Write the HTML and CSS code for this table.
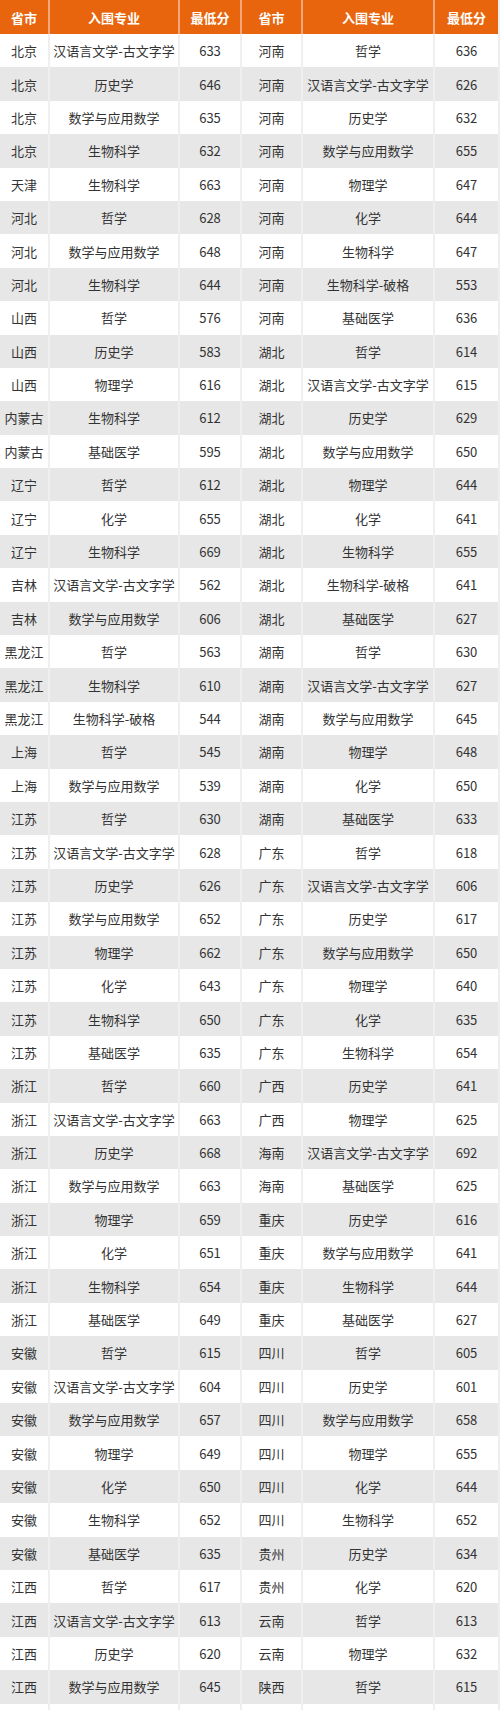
FILE: index.html
```html
<!DOCTYPE html>
<html lang="zh">
<head>
<meta charset="utf-8">
<title>入围专业最低分</title>
<link rel="stylesheet" href="styles.css">
</head>
<body>
<div class="table">
  <div class="row head"><div class="c">省市</div><div class="c">入围专业</div><div class="c">最低分</div><div class="c">省市</div><div class="c">入围专业</div><div class="c">最低分</div></div>
  <div class="row"><div class="c">北京</div><div class="c">汉语言文学-古文字学</div><div class="c">633</div><div class="c">河南</div><div class="c">哲学</div><div class="c">636</div></div>
  <div class="row"><div class="c">北京</div><div class="c">历史学</div><div class="c">646</div><div class="c">河南</div><div class="c">汉语言文学-古文字学</div><div class="c">626</div></div>
  <div class="row"><div class="c">北京</div><div class="c">数学与应用数学</div><div class="c">635</div><div class="c">河南</div><div class="c">历史学</div><div class="c">632</div></div>
  <div class="row"><div class="c">北京</div><div class="c">生物科学</div><div class="c">632</div><div class="c">河南</div><div class="c">数学与应用数学</div><div class="c">655</div></div>
  <div class="row"><div class="c">天津</div><div class="c">生物科学</div><div class="c">663</div><div class="c">河南</div><div class="c">物理学</div><div class="c">647</div></div>
  <div class="row"><div class="c">河北</div><div class="c">哲学</div><div class="c">628</div><div class="c">河南</div><div class="c">化学</div><div class="c">644</div></div>
  <div class="row"><div class="c">河北</div><div class="c">数学与应用数学</div><div class="c">648</div><div class="c">河南</div><div class="c">生物科学</div><div class="c">647</div></div>
  <div class="row"><div class="c">河北</div><div class="c">生物科学</div><div class="c">644</div><div class="c">河南</div><div class="c">生物科学-破格</div><div class="c">553</div></div>
  <div class="row"><div class="c">山西</div><div class="c">哲学</div><div class="c">576</div><div class="c">河南</div><div class="c">基础医学</div><div class="c">636</div></div>
  <div class="row"><div class="c">山西</div><div class="c">历史学</div><div class="c">583</div><div class="c">湖北</div><div class="c">哲学</div><div class="c">614</div></div>
  <div class="row"><div class="c">山西</div><div class="c">物理学</div><div class="c">616</div><div class="c">湖北</div><div class="c">汉语言文学-古文字学</div><div class="c">615</div></div>
  <div class="row"><div class="c">内蒙古</div><div class="c">生物科学</div><div class="c">612</div><div class="c">湖北</div><div class="c">历史学</div><div class="c">629</div></div>
  <div class="row"><div class="c">内蒙古</div><div class="c">基础医学</div><div class="c">595</div><div class="c">湖北</div><div class="c">数学与应用数学</div><div class="c">650</div></div>
  <div class="row"><div class="c">辽宁</div><div class="c">哲学</div><div class="c">612</div><div class="c">湖北</div><div class="c">物理学</div><div class="c">644</div></div>
  <div class="row"><div class="c">辽宁</div><div class="c">化学</div><div class="c">655</div><div class="c">湖北</div><div class="c">化学</div><div class="c">641</div></div>
  <div class="row"><div class="c">辽宁</div><div class="c">生物科学</div><div class="c">669</div><div class="c">湖北</div><div class="c">生物科学</div><div class="c">655</div></div>
  <div class="row"><div class="c">吉林</div><div class="c">汉语言文学-古文字学</div><div class="c">562</div><div class="c">湖北</div><div class="c">生物科学-破格</div><div class="c">641</div></div>
  <div class="row"><div class="c">吉林</div><div class="c">数学与应用数学</div><div class="c">606</div><div class="c">湖北</div><div class="c">基础医学</div><div class="c">627</div></div>
  <div class="row"><div class="c">黑龙江</div><div class="c">哲学</div><div class="c">563</div><div class="c">湖南</div><div class="c">哲学</div><div class="c">630</div></div>
  <div class="row"><div class="c">黑龙江</div><div class="c">生物科学</div><div class="c">610</div><div class="c">湖南</div><div class="c">汉语言文学-古文字学</div><div class="c">627</div></div>
  <div class="row"><div class="c">黑龙江</div><div class="c">生物科学-破格</div><div class="c">544</div><div class="c">湖南</div><div class="c">数学与应用数学</div><div class="c">645</div></div>
  <div class="row"><div class="c">上海</div><div class="c">哲学</div><div class="c">545</div><div class="c">湖南</div><div class="c">物理学</div><div class="c">648</div></div>
  <div class="row"><div class="c">上海</div><div class="c">数学与应用数学</div><div class="c">539</div><div class="c">湖南</div><div class="c">化学</div><div class="c">650</div></div>
  <div class="row"><div class="c">江苏</div><div class="c">哲学</div><div class="c">630</div><div class="c">湖南</div><div class="c">基础医学</div><div class="c">633</div></div>
  <div class="row"><div class="c">江苏</div><div class="c">汉语言文学-古文字学</div><div class="c">628</div><div class="c">广东</div><div class="c">哲学</div><div class="c">618</div></div>
  <div class="row"><div class="c">江苏</div><div class="c">历史学</div><div class="c">626</div><div class="c">广东</div><div class="c">汉语言文学-古文字学</div><div class="c">606</div></div>
  <div class="row"><div class="c">江苏</div><div class="c">数学与应用数学</div><div class="c">652</div><div class="c">广东</div><div class="c">历史学</div><div class="c">617</div></div>
  <div class="row"><div class="c">江苏</div><div class="c">物理学</div><div class="c">662</div><div class="c">广东</div><div class="c">数学与应用数学</div><div class="c">650</div></div>
  <div class="row"><div class="c">江苏</div><div class="c">化学</div><div class="c">643</div><div class="c">广东</div><div class="c">物理学</div><div class="c">640</div></div>
  <div class="row"><div class="c">江苏</div><div class="c">生物科学</div><div class="c">650</div><div class="c">广东</div><div class="c">化学</div><div class="c">635</div></div>
  <div class="row"><div class="c">江苏</div><div class="c">基础医学</div><div class="c">635</div><div class="c">广东</div><div class="c">生物科学</div><div class="c">654</div></div>
  <div class="row"><div class="c">浙江</div><div class="c">哲学</div><div class="c">660</div><div class="c">广西</div><div class="c">历史学</div><div class="c">641</div></div>
  <div class="row"><div class="c">浙江</div><div class="c">汉语言文学-古文字学</div><div class="c">663</div><div class="c">广西</div><div class="c">物理学</div><div class="c">625</div></div>
  <div class="row"><div class="c">浙江</div><div class="c">历史学</div><div class="c">668</div><div class="c">海南</div><div class="c">汉语言文学-古文字学</div><div class="c">692</div></div>
  <div class="row"><div class="c">浙江</div><div class="c">数学与应用数学</div><div class="c">663</div><div class="c">海南</div><div class="c">基础医学</div><div class="c">625</div></div>
  <div class="row"><div class="c">浙江</div><div class="c">物理学</div><div class="c">659</div><div class="c">重庆</div><div class="c">历史学</div><div class="c">616</div></div>
  <div class="row"><div class="c">浙江</div><div class="c">化学</div><div class="c">651</div><div class="c">重庆</div><div class="c">数学与应用数学</div><div class="c">641</div></div>
  <div class="row"><div class="c">浙江</div><div class="c">生物科学</div><div class="c">654</div><div class="c">重庆</div><div class="c">生物科学</div><div class="c">644</div></div>
  <div class="row"><div class="c">浙江</div><div class="c">基础医学</div><div class="c">649</div><div class="c">重庆</div><div class="c">基础医学</div><div class="c">627</div></div>
  <div class="row"><div class="c">安徽</div><div class="c">哲学</div><div class="c">615</div><div class="c">四川</div><div class="c">哲学</div><div class="c">605</div></div>
  <div class="row"><div class="c">安徽</div><div class="c">汉语言文学-古文字学</div><div class="c">604</div><div class="c">四川</div><div class="c">历史学</div><div class="c">601</div></div>
  <div class="row"><div class="c">安徽</div><div class="c">数学与应用数学</div><div class="c">657</div><div class="c">四川</div><div class="c">数学与应用数学</div><div class="c">658</div></div>
  <div class="row"><div class="c">安徽</div><div class="c">物理学</div><div class="c">649</div><div class="c">四川</div><div class="c">物理学</div><div class="c">655</div></div>
  <div class="row"><div class="c">安徽</div><div class="c">化学</div><div class="c">650</div><div class="c">四川</div><div class="c">化学</div><div class="c">644</div></div>
  <div class="row"><div class="c">安徽</div><div class="c">生物科学</div><div class="c">652</div><div class="c">四川</div><div class="c">生物科学</div><div class="c">652</div></div>
  <div class="row"><div class="c">安徽</div><div class="c">基础医学</div><div class="c">635</div><div class="c">贵州</div><div class="c">历史学</div><div class="c">634</div></div>
  <div class="row"><div class="c">江西</div><div class="c">哲学</div><div class="c">617</div><div class="c">贵州</div><div class="c">化学</div><div class="c">620</div></div>
  <div class="row"><div class="c">江西</div><div class="c">汉语言文学-古文字学</div><div class="c">613</div><div class="c">云南</div><div class="c">哲学</div><div class="c">613</div></div>
  <div class="row"><div class="c">江西</div><div class="c">历史学</div><div class="c">620</div><div class="c">云南</div><div class="c">物理学</div><div class="c">632</div></div>
  <div class="row"><div class="c">江西</div><div class="c">数学与应用数学</div><div class="c">645</div><div class="c">陕西</div><div class="c">哲学</div><div class="c">615</div></div>
  <div class="row"><div class="c"></div><div class="c"></div><div class="c"></div><div class="c"></div><div class="c"></div><div class="c"></div></div>
</div>
</body>
</html>
```

FILE: styles.css
```css
html, body {
  margin: 0;
  padding: 0;
  background: #ffffff;
}

body {
  font-family: "Noto Sans CJK SC", "Noto Sans", sans-serif;
  font-size: 13px;
  color: #333333;
  width: 500px;
  height: 1710px;
  overflow: hidden;
}

.table {
  width: 500px;
}

.row {
  display: grid;
  grid-template-columns: 50px 130px 62px 61px 132px 65px;
  height: 33.4px;
}

.row:nth-child(odd) {
  background: #e7e7e7;
}

.row:nth-child(even) {
  background: #ffffff;
}

.row.head {
  height: 34px;
  background: #e8650d;
  color: #ffffff;
  font-weight: bold;
}

.c {
  display: flex;
  align-items: center;
  justify-content: center;
  white-space: nowrap;
  box-sizing: border-box;
  border-right: 2px solid #efefef;
}

.row.head .c {
  border-right-color: #f4a57a;
}

.row .c:last-child {
  border-right: 2px solid #eeeeee;
}
```
